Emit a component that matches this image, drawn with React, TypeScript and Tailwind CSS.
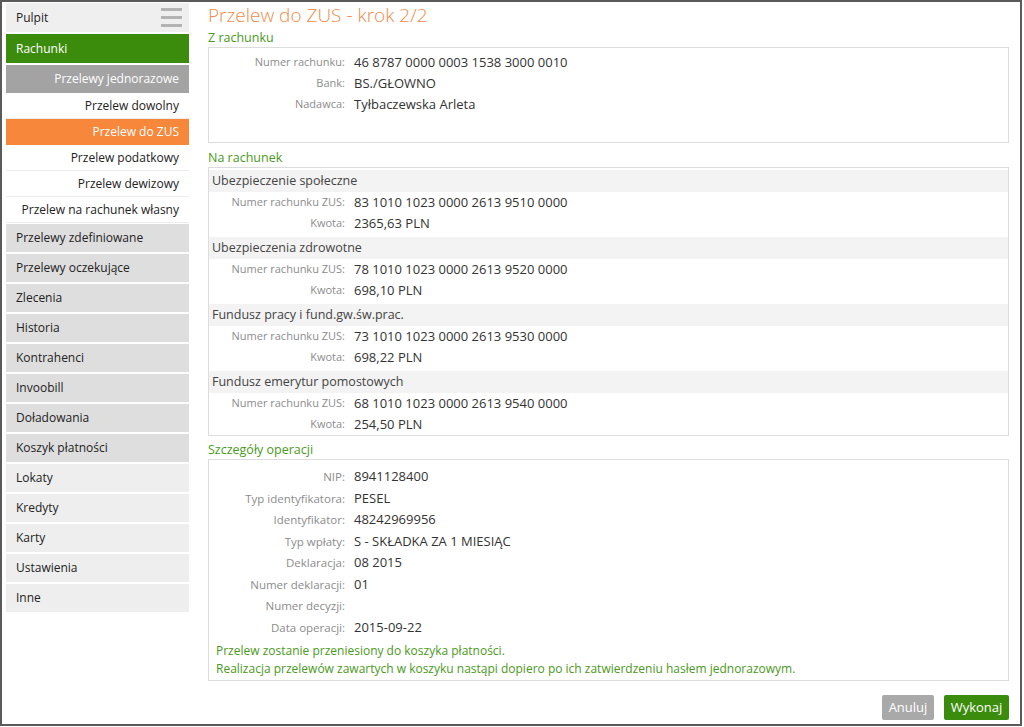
import React from 'react';

// Pozycje menu bocznego
const subItems = [
  { label: 'Przelew dowolny', active: false },
  { label: 'Przelew do ZUS', active: true },
  { label: 'Przelew podatkowy', active: false },
  { label: 'Przelew dewizowy', active: false },
  { label: 'Przelew na rachunek własny', active: false },
];

const darkItems = [
  'Przelewy zdefiniowane',
  'Przelewy oczekujące',
  'Zlecenia',
  'Historia',
  'Kontrahenci',
  'Invoobill',
  'Doładowania',
  'Koszyk płatności',
];

const lightItems = ['Lokaty', 'Kredyty', 'Karty', 'Ustawienia', 'Inne'];

const zusGroups = [
  { title: 'Ubezpieczenie społeczne', account: '83 1010 1023 0000 2613 9510 0000', amount: '2365,63 PLN' },
  { title: 'Ubezpieczenia zdrowotne', account: '78 1010 1023 0000 2613 9520 0000', amount: '698,10 PLN' },
  { title: 'Fundusz pracy i fund.gw.św.prac.', account: '73 1010 1023 0000 2613 9530 0000', amount: '698,22 PLN' },
  { title: 'Fundusz emerytur pomostowych', account: '68 1010 1023 0000 2613 9540 0000', amount: '254,50 PLN' },
];

const details: [string, string][] = [
  ['NIP:', '8941128400'],
  ['Typ identyfikatora:', 'PESEL'],
  ['Identyfikator:', '48242969956'],
  ['Typ wpłaty:', 'S - SKŁADKA ZA 1 MIESIĄC'],
  ['Deklaracja:', '08 2015'],
  ['Numer deklaracji:', '01'],
  ['Numer decyzji:', ''],
  ['Data operacji:', '2015-09-22'],
];

function Sidebar() {
  return (
    <div className="w-[183px] ml-[4px] mt-[1px] flex flex-col text-[12px] text-[#222]">
      {/* Pulpit */}
      <div className="h-[29px] bg-[#efefef] flex items-center justify-between pl-[10px] pr-[7px]">
        <span>Pulpit</span>
        <div className="flex flex-col gap-[5px]">
          <div className="w-[21px] h-[3px] bg-[#b3b3b3]" />
          <div className="w-[21px] h-[3px] bg-[#b3b3b3]" />
          <div className="w-[21px] h-[3px] bg-[#b3b3b3]" />
        </div>
      </div>
      <div className="h-[29px] mt-[2px] bg-[#3b8c0c] text-white flex items-center pl-[10px]">Rachunki</div>
      <div className="h-[28px] mt-[2px] bg-[#a3a3a3] text-white flex items-center justify-end pr-[10px]">
        Przelewy jednorazowe
      </div>
      {/* Podmenu */}
      <div className="flex flex-col">
        {subItems.map((item) => (
          <div
            key={item.label}
            className={
              item.active
                ? 'h-[26px] bg-[#f7873b] text-white flex items-center justify-end pr-[10px]'
                : 'h-[26px] bg-white border-b border-[#ececec] flex items-center justify-end pr-[10px]'
            }
          >
            {item.label}
          </div>
        ))}
      </div>
      <div className="flex flex-col gap-[2px] mt-[1px]">
        {darkItems.map((label) => (
          <div key={label} className="h-[28px] bg-[#dedede] flex items-center pl-[10px]">
            {label}
          </div>
        ))}
        {lightItems.map((label) => (
          <div key={label} className="h-[28px] bg-[#eeeeee] flex items-center pl-[10px]">
            {label}
          </div>
        ))}
      </div>
    </div>
  );
}

function Row({ label, value, labelSize = 'text-[11px]', h = 'h-[21px]' }: { label: string; value: string; labelSize?: string; h?: string }) {
  return (
    <div className={`${h} flex items-center`}>
      <div className={`w-[136px] text-right ${labelSize} text-[#8c8c8c]`}>{label}</div>
      <div className="ml-[9px] text-[13px] text-[#333]">{value}</div>
    </div>
  );
}

function SectionTitle({ children }: { children: React.ReactNode }) {
  return <div className="h-[18px] flex items-center text-[12.5px] text-[#4a9a22]">{children}</div>;
}

export default function App() {
  return (
    <div
      className="w-[1022px] h-[726px] border-2 border-[#5a5a5a] bg-white flex"
      style={{ fontFamily: '"Open Sans", "Noto Sans", sans-serif' }}
    >
      <Sidebar />

      <div className="ml-[19px] w-[801px] flex flex-col">
        {/* Tytuł */}
        <div className="h-[26px] flex items-center text-[19px] font-light text-[#ef8a48] leading-none">
          Przelew do ZUS - krok 2/2
        </div>

        {/* Z rachunku */}
        <div className="mt-[1px]">
          <SectionTitle>Z rachunku</SectionTitle>
        </div>
        <div className="h-[96px] border border-[#dcdcdc] pt-[4px]">
          <Row label="Numer rachunku:" value="46 8787 0000 0003 1538 3000 0010" />
          <Row label="Bank:" value="BS./GŁOWNO" />
          <Row label="Nadawca:" value="Tyłbaczewska Arleta" />
        </div>

        {/* Na rachunek */}
        <div className="mt-[6px]">
          <SectionTitle>Na rachunek</SectionTitle>
        </div>
        <div className="border border-[#dcdcdc] pt-[2px]">
          {zusGroups.map((g, i) => (
            <div key={g.title} className={i === zusGroups.length - 1 ? 'pb-[0px]' : 'pb-[3px]'}>
              <div className="h-[22px] bg-[#f3f3f3] flex items-center px-[3px] text-[12.5px] text-[#444]">
                {g.title}
              </div>
              <Row label="Numer rachunku ZUS:" value={g.account} />
              <Row label="Kwota:" value={g.amount} />
            </div>
          ))}
        </div>

        {/* Szczegóły operacji */}
        <div className="mt-[5px]">
          <SectionTitle>Szczegóły operacji</SectionTitle>
        </div>
        <div className="h-[222px] border border-[#dcdcdc] pt-[6px]">
          {details.map(([label, value]) => (
            <Row key={label} label={label} value={value} labelSize="text-[11.5px]" h="h-[21.5px]" />
          ))}
          <div className="pl-[7px] pt-[4px] text-[12px] leading-[18px] text-[#4a9a22]">
            <div>Przelew zostanie przeniesiony do koszyka płatności.</div>
            <div>Realizacja przelewów zawartych w koszyku nastąpi dopiero po ich zatwierdzeniu hasłem jednorazowym.</div>
          </div>
        </div>

        {/* Przyciski */}
        <div className="mt-[14px] flex justify-end gap-[10px]">
          <button className="h-[25px] w-[52px] rounded-[2px] bg-[#a9a9a9] text-white text-[13px]">Anuluj</button>
          <button className="h-[25px] w-[65px] rounded-[2px] bg-[#3b8c0c] text-white text-[13px]">Wykonaj</button>
        </div>
      </div>
    </div>
  );
}
